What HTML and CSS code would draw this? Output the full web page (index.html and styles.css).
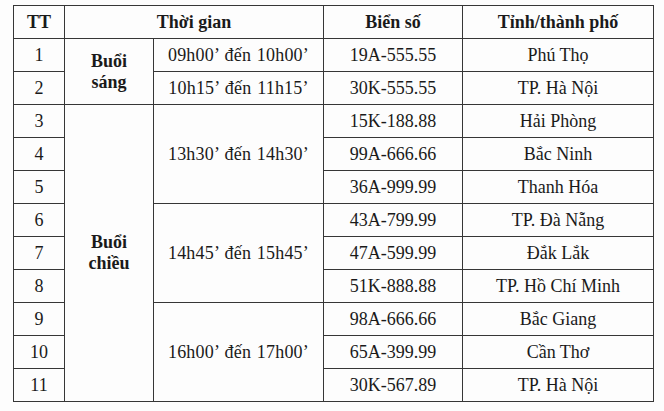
FILE: index.html
```html
<!DOCTYPE html>
<html lang="vi">
<head>
<meta charset="utf-8">
<link rel="stylesheet" href="styles.css">
</head>
<body>
<table class="schedule">
  <colgroup>
    <col class="c-tt"><col class="c-session"><col class="c-time"><col class="c-plate"><col class="c-city">
  </colgroup>
  <thead>
    <tr><th>TT</th><th colspan="2">Thời gian</th><th>Biển số</th><th>Tỉnh/thành phố</th></tr>
  </thead>
  <tbody>
    <tr><td>1</td><td class="session" rowspan="2">Buổi<br>sáng</td><td class="time">09h00’ đến 10h00’</td><td>19A-555.55</td><td>Phú Thọ</td></tr>
    <tr><td>2</td><td class="time">10h15’ đến 11h15’</td><td>30K-555.55</td><td>TP. Hà Nội</td></tr>
    <tr><td>3</td><td class="session" rowspan="9">Buổi<br>chiều</td><td class="time" rowspan="3">13h30’ đến 14h30’</td><td>15K-188.88</td><td>Hải Phòng</td></tr>
    <tr><td>4</td><td>99A-666.66</td><td>Bắc Ninh</td></tr>
    <tr><td>5</td><td>36A-999.99</td><td>Thanh Hóa</td></tr>
    <tr><td>6</td><td class="time" rowspan="3">14h45’ đến 15h45’</td><td>43A-799.99</td><td>TP. Đà Nẵng</td></tr>
    <tr><td>7</td><td>47A-599.99</td><td>Đắk Lắk</td></tr>
    <tr><td>8</td><td>51K-888.88</td><td>TP. Hồ Chí Minh</td></tr>
    <tr><td>9</td><td class="time" rowspan="3">16h00’ đến 17h00’</td><td>98A-666.66</td><td>Bắc Giang</td></tr>
    <tr><td>10</td><td>65A-399.99</td><td>Cần Thơ</td></tr>
    <tr><td>11</td><td>30K-567.89</td><td>TP. Hà Nội</td></tr>
  </tbody>
</table>
</body>
</html>
```
FILE: styles.css
```css
html, body {
  margin: 0;
  background: #fdfdfd;
}
body {
  padding: 5px 0 0 13px;
  font-family: "Liberation Serif", "Times New Roman", serif;
  color: #1a1a1a;
}
.schedule {
  border-collapse: collapse;
  table-layout: fixed;
  width: 640px;
  font-size: 18px;
}
.c-tt { width: 51px; }
.c-session { width: 89px; }
.c-time { width: 170px; }
.c-plate { width: 139px; }
.c-city { width: 191px; }
.schedule th,
.schedule td {
  border: 1.6px solid #363636;
  height: 32px;
  padding: 0;
  text-align: center;
  vertical-align: middle;
  line-height: 20px;
  white-space: nowrap;
}
.schedule th {
  font-weight: bold;
}
.schedule td.time {
  word-spacing: 1px;
  letter-spacing: 0.2px;
}
.schedule td.session {
  font-weight: bold;
  line-height: 21px;
}
```
